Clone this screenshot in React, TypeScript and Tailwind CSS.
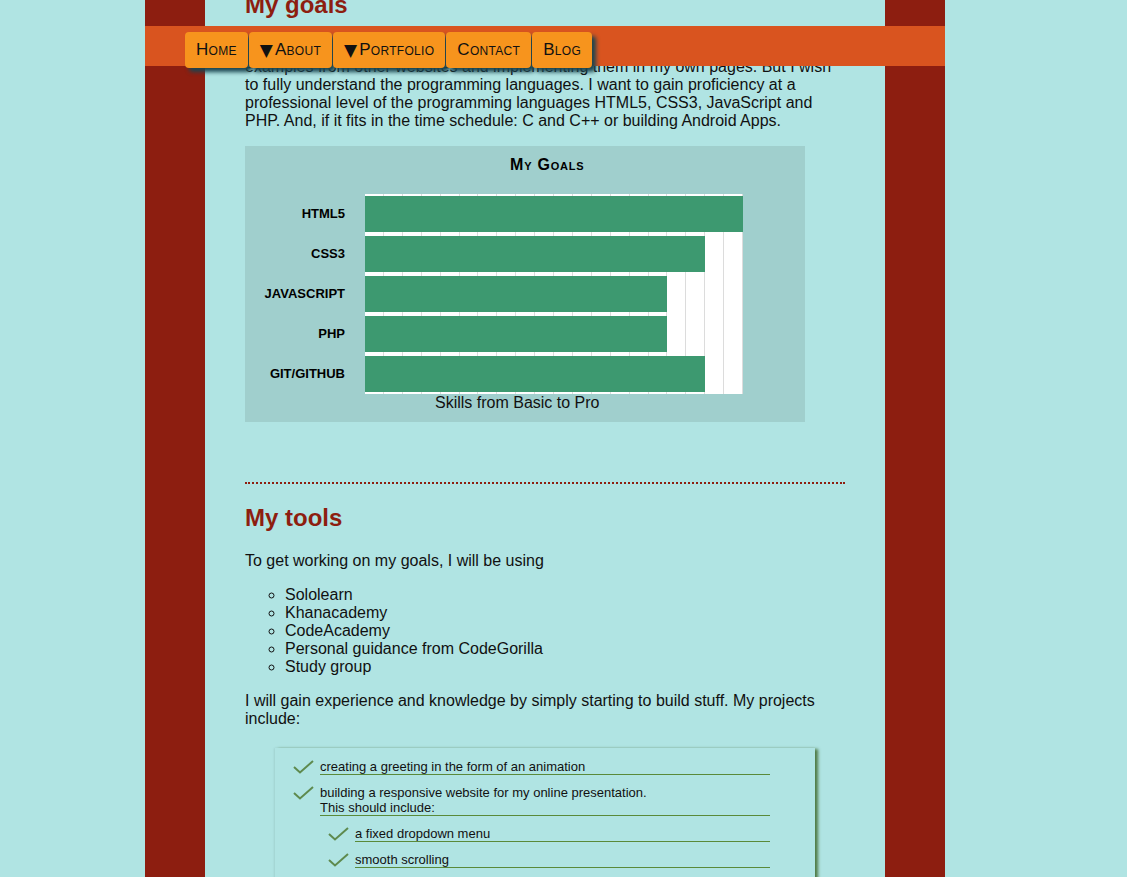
import React from "react";

const bars = [
  { label: "HTML5", w: "w-full" },
  { label: "CSS3", w: "w-[90%]" },
  { label: "JAVASCRIPT", w: "w-[80%]" },
  { label: "PHP", w: "w-[80%]" },
  { label: "GIT/GITHUB", w: "w-[90%]" },
];

function Check() {
  return (
    <svg width="21" height="14" viewBox="0 0 21 14" className="mt-[1px] shrink-0">
      <polyline points="1,7 7,12.5 20,1" fill="none" stroke="#5e8a4e" strokeWidth="2" />
    </svg>
  );
}

function Item({ children }: { children: React.ReactNode }) {
  return (
    <li className="mb-[10px] flex">
      <div className="w-[27px] shrink-0">
        <Check />
      </div>
      <div className="flex-1 border-b border-[#5a8a3a] text-[13px] leading-[15px] text-[#111]">{children}</div>
    </li>
  );
}

const navItems = [
  { arrow: false, label: "Home" },
  { arrow: true, label: "About" },
  { arrow: true, label: "Portfolio" },
  { arrow: false, label: "Contact" },
  { arrow: false, label: "Blog" },
];

export default function App() {
  return (
    <div className="relative h-[877px] w-full overflow-hidden bg-[#b0e4e3] font-['Liberation_Sans',Arial,sans-serif] text-[16px] leading-[18px] text-[#111]">
      <div className="ml-[145px] h-full w-[800px] bg-[#8d1e10] px-[60px]">
        <div className="flex h-full flex-col bg-[#b0e4e3] px-[40px]">
          <div className="-mt-[9px]">
            <h2 className="text-[24px] font-bold leading-[28px] text-[#8d1e10]">My goals</h2>
            <p className="mt-[21px] whitespace-nowrap">
              Until now I learned a lot by copying pieces of code from other people and
              <br />
              examples from other websites and implementing them in my own pages. But I wish
              <br />
              to fully understand the programming languages. I want to gain proficiency at a
              <br />
              professional level of the programming languages HTML5, CSS3, JavaScript and
              <br />
              PHP. And, if it fits in the time schedule: C and C++ or building Android Apps.
            </p>

            <div className="mt-[16px] w-[560px] bg-[#a0cfcd] pb-[11px] pt-[10px]">
              <div className="pl-[265px] text-[16px] font-bold leading-[18px] tracking-[0.8px] text-black [font-variant:small-caps]">
                My Goals
              </div>
              <div className="mt-[20px] flex">
                <div className="flex w-[100px] flex-col">
                  {bars.map((b) => (
                    <div key={b.label} className="flex h-[40px] items-center justify-end text-[13px] font-bold text-black">
                      {b.label}
                    </div>
                  ))}
                </div>
                <div className="ml-[20px] flex h-[200px] w-[378px] flex-col gap-[4px] bg-white bg-[image:repeating-linear-gradient(90deg,#ffffff_0px,#ffffff_17.9px,#dcdcdc_17.9px,#dcdcdc_18.9px)] py-[2px]">
                  {bars.map((b) => (
                    <div key={b.label} className={`h-[36px] bg-[#3d9970] ${b.w}`} />
                  ))}
                </div>
              </div>
              <div className="pl-[190px] pt-[1px] leading-[16px]">Skills from Basic to Pro</div>
            </div>

            <div className="mt-[60px] border-t-2 border-dotted border-[#8d1e10]" />

            <h2 className="mt-[20px] text-[24px] font-bold leading-[28px] text-[#8d1e10]">My tools</h2>
            <p className="mt-[20px]">To get working on my goals, I will be using</p>
            <ul className="mt-[16px] list-[circle] pl-[40px]">
              <li>Sololearn</li>
              <li>Khanacademy</li>
              <li>CodeAcademy</li>
              <li>Personal guidance from CodeGorilla</li>
              <li>Study group</li>
            </ul>
            <p className="mt-[16px]">
              I will gain experience and knowledge by simply starting to build stuff. My projects
              <br />
              include:
            </p>

            <div className="mx-auto mt-[20px] w-[540px] pl-[18px] pr-[45px] pt-[11px] shadow-[3px_1px_3px_#4f7a45,-1px_0_2px_rgba(0,0,0,0.08)]">
              <ul>
                <Item>creating a greeting in the form of an animation</Item>
                <Item>
                  building a responsive website for my online presentation.
                  <br />
                  This should include:
                </Item>
                <li>
                  <ul className="ml-[35px]">
                    <Item>a fixed dropdown menu</Item>
                    <Item>smooth scrolling</Item>
                    <Item>a contact form</Item>
                    <Item>a portfolio page</Item>
                  </ul>
                </li>
              </ul>
            </div>
          </div>
        </div>
      </div>

      <div className="absolute left-[145px] top-[26px] flex h-[40px] w-[800px] gap-[1px] bg-[#d9541f] pl-[40px] pt-[6px]">
        {navItems.map((n) => (
          <div
            key={n.label}
            className="flex h-[36px] items-center rounded-[4px] bg-[#f7941d] px-[11px] text-[17px] tracking-[0.3px] text-[#111] shadow-[4px_4px_4px_#1b4550] [font-variant:small-caps]"
          >
            {n.arrow && (
              <span className="mr-[2px] font-['DejaVu_Sans',sans-serif] text-[17px] tracking-normal">▼</span>
            )}
            {n.label}
          </div>
        ))}
      </div>
    </div>
  );
}
